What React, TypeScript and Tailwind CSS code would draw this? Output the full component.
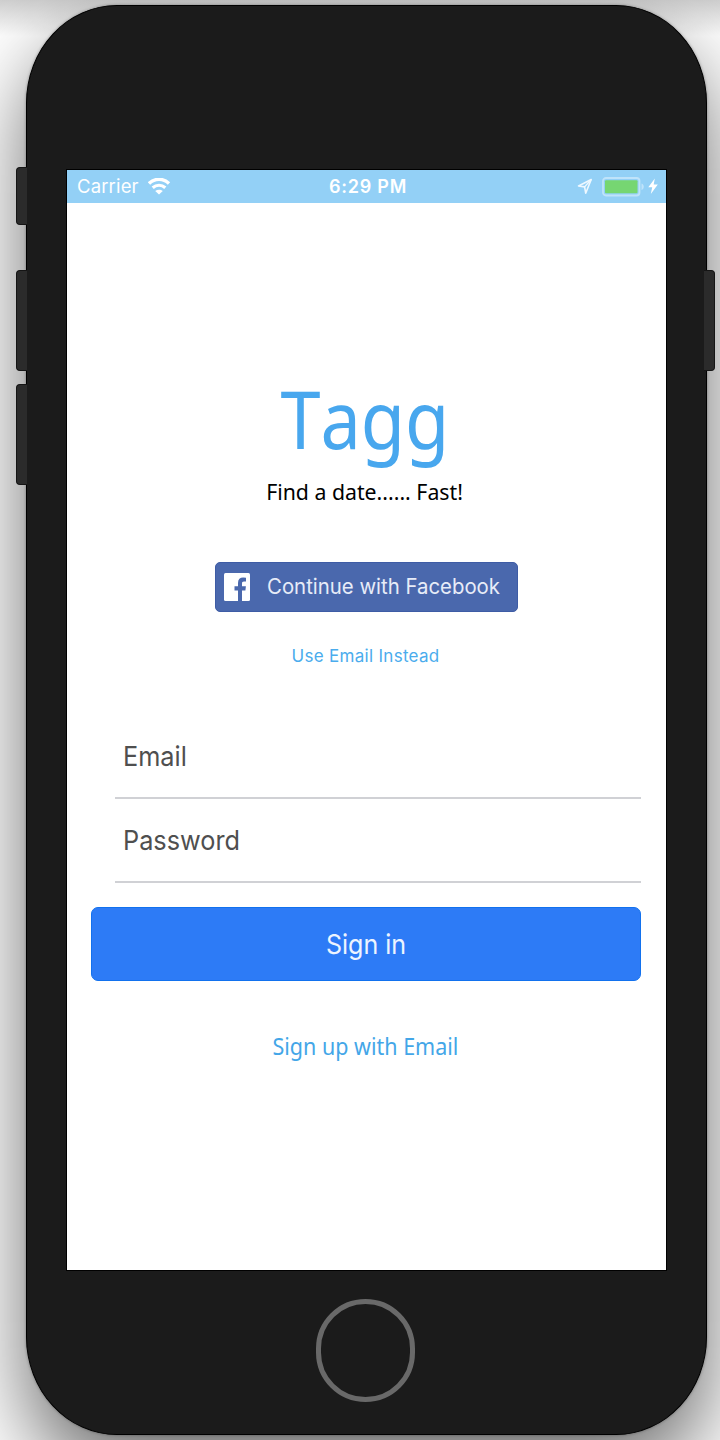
import React from "react";

function WifiIcon() {
  return (
    <svg width="24" height="18" viewBox="0 0 24 18" fill="none">
      <path d="M1 5.500C6.800 -.1 15.200 -.1 21 5.500" stroke="#fff" strokeWidth="3.400" />
      <path d="M4.700 9.800C8.400 6.400 13.600 6.400 17.300 9.800" stroke="#fff" strokeWidth="3.200" />
      <path d="M11 16.600L7.200 13C9.400 11.200 12.600 11.200 14.800 13Z" fill="#fff" />
    </svg>
  );
}

function LocationIcon() {
  return (
    <svg width="16" height="17" viewBox="0 0 16 17" fill="none">
      <path d="M14.200 1.500L1.500 8L7.600 8.900L8.700 15.200Z" stroke="#eef8ff" strokeWidth="1.600" strokeLinejoin="round" />
      <path d="M14.200 1.500L7.600 8.900" stroke="#eef8ff" strokeWidth="1.400" />
    </svg>
  );
}

function Battery() {
  return (
    <svg width="42" height="20" viewBox="0 0 42 20">
      <rect x="1" y="1" width="36.500" height="17.500" rx="3" fill="none" stroke="#bfe3fa" strokeWidth="1.800" />
      <rect x="3" y="3.300" width="32.500" height="13" rx="1" fill="#76d672" />
      <path d="M39.500 6.500C42.500 7.500 42.500 12 39.500 13Z" fill="#bfe3fa" />
    </svg>
  );
}

function BoltIcon() {
  return (
    <svg width="10" height="17" viewBox="0 0 10 17">
      <path d="M6.800 .5L.3 9.300H4.200L2.800 16L9.800 6.600H5.700Z" fill="#fff" />
    </svg>
  );
}

function FacebookIcon() {
  return (
    <svg width="26" height="28" viewBox="0 0 26 28">
      <rect width="26" height="28" rx="1.500" fill="#fff" />
      <path d="M14 28V17.500H10.500V13.300H14V10C14 6.400 16 4.600 19.200 4.600L22 4.800V8.600H20C18.400 8.600 18 9.400 18 10.700V13.300H21.900L21.400 17.500H18V28Z" fill="#4a68ad" />
    </svg>
  );
}

function StatusBar() {
  return (
    <div className="grid h-[33px] grid-cols-3 items-center bg-[#93d0f6] text-[18px] text-white">
      <div className="flex items-center pt-px pl-[10px]">
        <span className="w-[71px] whitespace-nowrap text-[18.5px] tracking-[0.15px]">Carrier</span>
        <WifiIcon />
      </div>
      <div className="pl-[3px] text-center font-semibold tracking-[0.75px] whitespace-nowrap">6:29 PM</div>
      <div className="flex items-center justify-end pr-[8px]">
        <LocationIcon />
        <div className="ml-[9px]"><Battery /></div>
        <div className="ml-[4px]"><BoltIcon /></div>
      </div>
    </div>
  );
}

function Field({ label }: { label: string }) {
  return (
    <div className="mr-[25px] ml-[48px] flex h-[84px] items-center border-b-2 border-[#d0d1d5] pt-[2px] pl-[8px] text-[27.5px] text-[#4f4f4f]">
      <span className="origin-left scale-x-[0.92]">{label}</span>
    </div>
  );
}

function Screen() {
  return (
    <div className="flex h-[1100px] w-[599px] flex-col bg-white outline outline-black">
      <StatusBar />
      <h1 className="mt-[160px] mb-[4px] flex h-[110px] items-center justify-center pr-[3px] font-['Noto_Sans','Open_Sans',sans-serif] text-[80px] leading-none text-[#48a7ee]">
        <span className="scale-x-[0.9] [font-kerning:none]">Tagg</span>
      </h1>
      <p className="flex h-[30px] items-center justify-center pr-[3px] font-['Noto_Sans','Open_Sans',sans-serif] text-[22.4px] text-black">
        <span className="scale-x-[0.95]">Find a date...... Fast!</span>
      </p>
      <button className="mt-[55px] ml-[148px] flex h-[50px] w-[303px] items-center rounded-[5px] border border-[#3e5ca5] bg-[#4a68ad] pl-[8px] text-[21px] text-[#e7ecf8]">
        <FacebookIcon />
        <span className="ml-[17px] origin-left scale-x-[0.97] whitespace-nowrap">Continue with Facebook</span>
      </button>
      <a className="mt-[30px] flex h-[30px] items-center justify-center pr-[2px] text-[17px] tracking-[0.3px] text-[#4aaced]">
        <span>Use Email Instead</span>
      </a>
      <div className="mt-[43px]">
        <Field label="Email" />
        <Field label="Password" />
      </div>
      <button className="mt-[24px] mr-[25px] ml-[24px] flex h-[74px] items-center justify-center rounded-[7px] border border-[#1271ee] bg-[#2d7bf6] pt-px text-[27.5px] text-[#edf4ff]">
        <span className="scale-x-[0.91]">Sign in</span>
      </button>
      <a className="mt-[49px] flex h-[32px] items-center justify-center pr-[2px] font-['Noto_Sans','Open_Sans',sans-serif] text-[23px] text-[#43a6e8]">
        <span className="scale-x-[0.935]">Sign up with Email</span>
      </a>
    </div>
  );
}

export default function App() {
  return (
    <div className="relative h-[1440px] w-[720px] overflow-hidden bg-white font-['Inter','Liberation_Sans',sans-serif]">
      <div className="absolute inset-x-0 top-0 h-[36px] bg-linear-to-b from-[#cfcfcf] to-white" />
      <div className="relative ml-[26px] flex h-[1440px] w-[681px] flex-col pt-[5px]">
        <div className="flex h-[1430px] flex-col items-center rounded-[91px/98px] border border-black bg-[#1b1b1b] pt-[164px] shadow-[0_0_3px_rgba(0,0,0,0.35),0_38px_84px_rgba(0,0,0,0.58)]">
          <Screen />
          <div className="mt-[29px] mr-[2px] h-[103px] w-[99px] rounded-full border-[5px] border-[#696969]" />
        </div>
      </div>
      <div className="absolute top-[167px] left-[16px] h-[58px] w-[11px] rounded-l-[4px] border border-r-0 border-[#151515] bg-[#2b2b2b]" />
      <div className="absolute top-[270px] left-[16px] h-[101px] w-[11px] rounded-l-[4px] border border-r-0 border-[#151515] bg-[#2b2b2b]" />
      <div className="absolute top-[384px] left-[16px] h-[101px] w-[11px] rounded-l-[4px] border border-r-0 border-[#151515] bg-[#2b2b2b]" />
      <div className="absolute top-[270px] left-[704px] h-[101px] w-[11px] rounded-r-[4px] border border-l-0 border-[#151515] bg-[#2b2b2b]" />
    </div>
  );
}
